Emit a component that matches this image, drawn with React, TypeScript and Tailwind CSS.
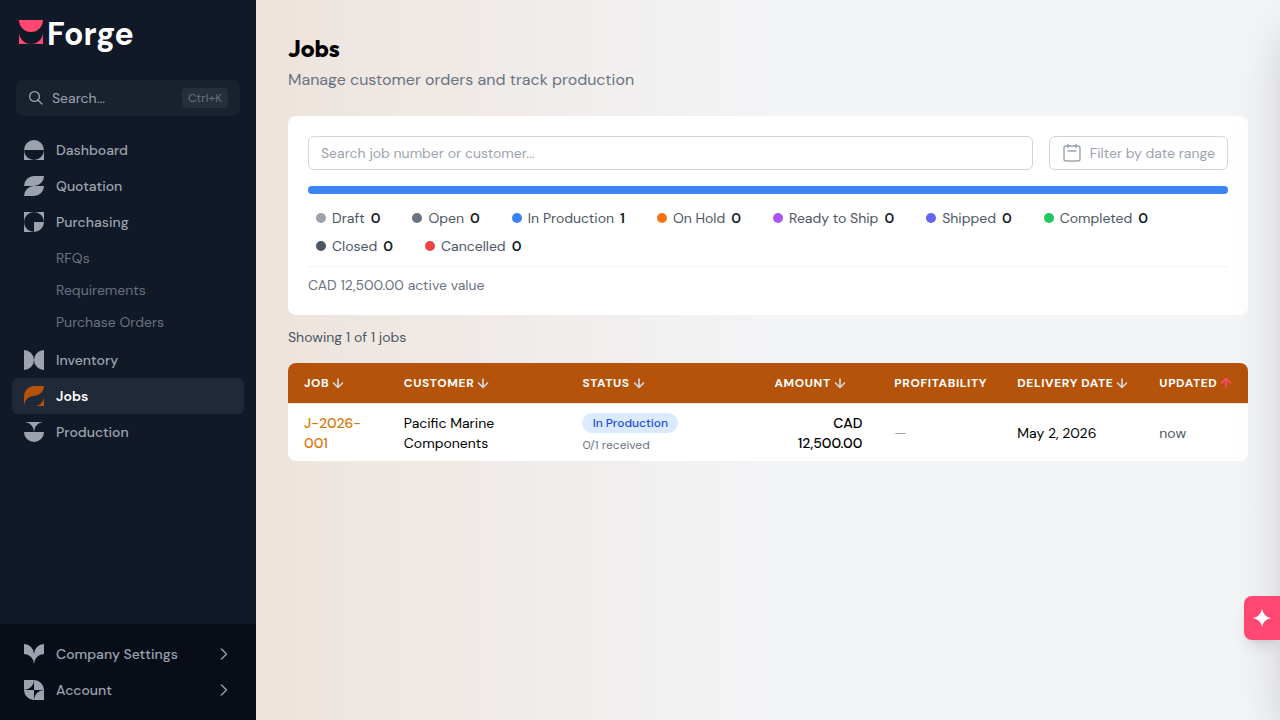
import type { ReactNode } from "react";

type Glyph = { d: string };

const glyphs: Record<string, string> = {
  dashboard: "M0 10a10 10 0 0 1 20 0zM0 10A10 10 0 0 0 10 20H0zM20 10A10 10 0 0 1 10 20H20z",
  quotation: "M0 10A10 10 0 0 1 10 0H20A10 10 0 0 1 10 10zM0 20A10 10 0 0 1 10 10H20A10 10 0 0 1 10 20z",
  purchasing: "M0 0H10A10 10 0 0 0 0 10zM20 0V10A10 10 0 0 0 10 0zM0 20V10A10 10 0 0 0 10 20zM10 10H20A10 10 0 0 1 10 20z",
  inventory: "M0 0A10 10 0 0 1 0 20zM20 0A10 10 0 0 0 20 20z",
  jobs: "M0 20V10A10 10 0 0 1 10 0H20A10 10 0 0 1 10 10A10 10 0 0 0 0 20zM20 10V20H12A10 10 0 0 0 20 10z",
  production: "M1 0H19A10 10 0 0 0 10 10A10 10 0 0 0 1 0zM0 10H20A10 10 0 0 1 0 10z",
  company: "M0 0A10 10 0 0 1 10 10A10 10 0 0 1 20 0V10A10 10 0 0 0 10 20A10 10 0 0 0 0 10z",
  account:
    "M0 0H10A10 10 0 0 1 0 10zM10 0A10 10 0 0 1 20 10A10 10 0 0 1 10 0zM0 10H10V20A10 10 0 0 1 0 10zM20 10V20H10A10 10 0 0 1 20 10zM10 0A10 10 0 0 1 20 10H10z",
};

function NavGlyph({ d }: Glyph) {
  return (
    <svg viewBox="0 0 20 20" className="size-5 shrink-0" fill="currentColor" aria-hidden="true">
      <path d={d} />
    </svg>
  );
}

function NavItem({ label, icon, active }: { label: string; icon: string; active?: boolean }) {
  return (
    <a
      href="#"
      aria-current={active ? "page" : undefined}
      className={
        active
          ? "flex h-9 items-center gap-3 rounded-md bg-[#1f2937] px-3 text-sm font-semibold text-white"
          : "flex h-9 items-center gap-3 rounded-md px-3 text-sm font-medium text-[#9ca3af]"
      }
    >
      <span className={active ? "text-[#b45309]" : ""}>
        <NavGlyph d={glyphs[icon]} />
      </span>
      {label}
    </a>
  );
}

function FooterItem({ label, icon }: { label: string; icon: string }) {
  return (
    <button type="button" className="flex h-9 w-full items-center gap-3 px-3 text-sm font-medium text-[#9ca3af]">
      <NavGlyph d={glyphs[icon]} />
      <span className="grow text-left">{label}</span>
      <svg viewBox="0 0 16 16" className="size-4" fill="none" stroke="currentColor" strokeWidth="1.3" strokeLinecap="round" strokeLinejoin="round" aria-hidden="true">
        <path d="M5.5 3l5 5-5 5" />
      </svg>
    </button>
  );
}

function Sidebar() {
  return (
    <aside className="flex w-64 shrink-0 flex-col bg-[#111827]">
      <a href="#" className="flex h-[68px] items-center gap-1 pl-[19px] text-white" aria-label="Forge">
        <svg viewBox="0 0 24 24" className="mb-1 size-6" fill="#ff4871" aria-hidden="true">
          <path d="M0 0H24A12 12 0 0 1 0 0zM0 12A12 12 0 0 0 12 24H0zM24 12A12 12 0 0 1 12 24H24z" />
        </svg>
        <span className="text-[32px] leading-9 font-bold">Forge</span>
      </a>
      <div className="px-4 pt-3">
        <button type="button" className="flex h-9 w-full items-center gap-2 rounded-lg bg-[#19212f] px-3 text-sm text-[#9ca3af]">
          <svg viewBox="0 0 16 16" className="size-4" fill="none" stroke="currentColor" strokeWidth="1.3" strokeLinecap="round" aria-hidden="true">
            <circle cx="6.5" cy="6.5" r="4.9" />
            <path d="M10 10l4 4" />
          </svg>
          <span className="grow text-left">Search...</span>
          <kbd className="rounded bg-[#262e3b] px-1.5 font-[inherit] text-xs leading-5 text-[#6b7280]">Ctrl+K</kbd>
        </button>
      </div>
      <nav className="grow px-3 pt-4">
        <NavItem label="Dashboard" icon="dashboard" />
        <NavItem label="Quotation" icon="quotation" />
        <NavItem label="Purchasing" icon="purchasing" />
        <ul className="mb-1 pt-0.5 pl-11 text-sm text-[#6b7280]">
          {["RFQs", "Requirements", "Purchase Orders"].map((item) => (
            <li key={item}>
              <a href="#" className="flex h-8 items-center">
                {item}
              </a>
            </li>
          ))}
        </ul>
        <NavItem label="Inventory" icon="inventory" />
        <NavItem label="Jobs" icon="jobs" active />
        <NavItem label="Production" icon="production" />
      </nav>
      <div className="bg-[#080d18] px-3 py-3">
        <FooterItem label="Company Settings" icon="company" />
        <FooterItem label="Account" icon="account" />
      </div>
    </aside>
  );
}

const statuses = [
  { label: "Draft", count: 0, dot: "bg-[#9ca3af]" },
  { label: "Open", count: 0, dot: "bg-[#6b7280]" },
  { label: "In Production", count: 1, dot: "bg-[#3b82f6]" },
  { label: "On Hold", count: 0, dot: "bg-[#f97316]" },
  { label: "Ready to Ship", count: 0, dot: "bg-[#a855f7]" },
  { label: "Shipped", count: 0, dot: "bg-[#6366f1]" },
  { label: "Completed", count: 0, dot: "bg-[#22c55e]" },
  { label: "Closed", count: 0, dot: "bg-[#4b5563]" },
  { label: "Cancelled", count: 0, dot: "bg-[#ef4444]" },
];

function Filters() {
  return (
    <section className="rounded-lg bg-white p-5">
      <div className="flex gap-4">
        <input
          type="text"
          aria-label="Search jobs"
          placeholder="Search job number or customer..."
          className="h-[34px] min-w-0 grow rounded-md border border-[#d1d5db] px-3 text-sm placeholder:text-[#9ca3af]"
        />
        <button type="button" className="flex h-[34px] shrink-0 items-center gap-2 rounded-md border border-[#d1d5db] px-3 text-sm whitespace-nowrap text-[#9ca3af]">
          <svg viewBox="0 0 20 20" className="size-5 shrink-0" fill="none" stroke="currentColor" strokeWidth="1.4" strokeLinecap="round" aria-hidden="true">
            <rect x="2" y="3" width="16" height="15" rx="2" />
            <path d="M6 1.5v3M14 1.5v3M6 8h8" />
          </svg>
          Filter by date range
        </button>
      </div>
      <div className="mt-4 h-2 rounded-full bg-[#3b82f6]" />
      <div className="mt-2.5 flex flex-wrap gap-x-4">
        {statuses.map((s) => (
          <button key={s.label} type="button" className="flex h-7 items-center gap-1.5 px-2 text-sm text-[#4b5563]">
            <span className={`size-2.5 rounded-full ${s.dot}`} />
            {s.label}
            <span className="font-semibold text-[#111827]">{s.count}</span>
          </button>
        ))}
      </div>
      <p className="mt-1.5 border-t border-gray-100 pt-2 text-sm text-[#6b7280]">CAD 12,500.00 active value</p>
    </section>
  );
}

function SortArrow({ up }: { up?: boolean }) {
  return (
    <svg viewBox="0 0 12 12" className={up ? "size-3 text-[#ff4871]" : "size-3 text-[#d1d5db]"} fill="none" stroke="currentColor" strokeWidth="1.7" strokeLinecap="round" strokeLinejoin="round" aria-hidden="true">
      <path d={up ? "M6 10V2M1.5 6L6 1.5L10.5 6" : "M6 2V10M1.5 6L6 10.5L10.5 6"} />
    </svg>
  );
}

function Head({ children, width, sort }: { children: ReactNode; width: string; sort?: "up" | "down" }) {
  return (
    <th scope="col" className={`h-10 p-0 pl-4 ${width}`}>
      <button type="button" className="flex w-full items-center gap-[3px] text-xs font-bold tracking-wider whitespace-nowrap text-white uppercase">
        {children}
        {sort && <SortArrow up={sort === "up"} />}
      </button>
    </th>
  );
}

function JobsTable() {
  return (
    <div className="mt-4 overflow-hidden rounded-lg bg-white">
      <table className="w-full table-fixed text-left text-sm">
        <thead className="border-b border-gray-200 bg-[#b45309]">
          <tr>
            <Head width="w-[10.4%]" sort="down">Job</Head>
            <Head width="w-[18.6%]" sort="down">Customer</Head>
            <Head width="w-[20%]" sort="down">Status</Head>
            <Head width="w-[12.5%]" sort="down">Amount</Head>
            <Head width="w-[12.8%]">Profitability</Head>
            <Head width="w-[14.8%]" sort="down">Delivery Date</Head>
            <Head width="w-[10.9%]" sort="up">Updated</Head>
          </tr>
        </thead>
        <tbody>
          <tr className="h-[58px] text-black [&>td]:pt-0.5">
            <td className="pl-4 font-medium">
              <a href="#" className="block w-16 text-[#d97706]">J-2026-001</a>
            </td>
            <td className="pr-8 pl-4">Pacific Marine Components</td>
            <td className="pl-4">
              <span className="block w-24 rounded-full bg-[#dbeafe] text-center text-xs leading-5 font-medium text-[#1d4ed8]">In Production</span>
              <span className="block pt-1 text-xs text-[#6b7280]">0/1 received</span>
            </td>
            <td className="pr-4 pl-8 text-right font-medium">CAD 12,500.00</td>
            <td className="pl-4 text-[#9ca3af]">—</td>
            <td className="pl-4">May 2, 2026</td>
            <td className="pl-4 text-[#4b5563]">now</td>
          </tr>
        </tbody>
      </table>
    </div>
  );
}

export default function App() {
  return (
    <div className="flex min-h-screen overflow-hidden font-['DM_Sans','Inter',sans-serif]">
      <Sidebar />
      <main className="min-w-0 grow bg-linear-to-r from-[#ede3dc] to-[#f3f4f6] to-50% px-8 py-8">
        <h1 className="font-['Outfit','DM_Sans','Inter',sans-serif] text-2xl leading-8 font-bold text-black">Jobs</h1>
        <p className="mt-1 mb-6 text-base text-[#6b7280]">Manage customer orders and track production</p>
        <Filters />
        <p className="mt-3 text-sm text-[#4b5563]">Showing 1 of 1 jobs</p>
        <JobsTable />
      </main>
      <aside className="fixed inset-y-0 left-full w-96 bg-white shadow-2xl" aria-hidden="true" />
      <button type="button" aria-label="Open assistant" className="fixed right-0 bottom-20 flex h-11 w-9 items-center justify-center rounded-l-lg bg-[#ff4871] text-white shadow-lg">
        <svg viewBox="0 0 20 20" className="size-5" fill="currentColor" aria-hidden="true">
          <path d="M10 1Q11.5 8.5 19 10Q11.5 11.5 10 19Q8.5 11.5 1 10Q8.5 8.5 10 1z" />
        </svg>
      </button>
    </div>
  );
}
